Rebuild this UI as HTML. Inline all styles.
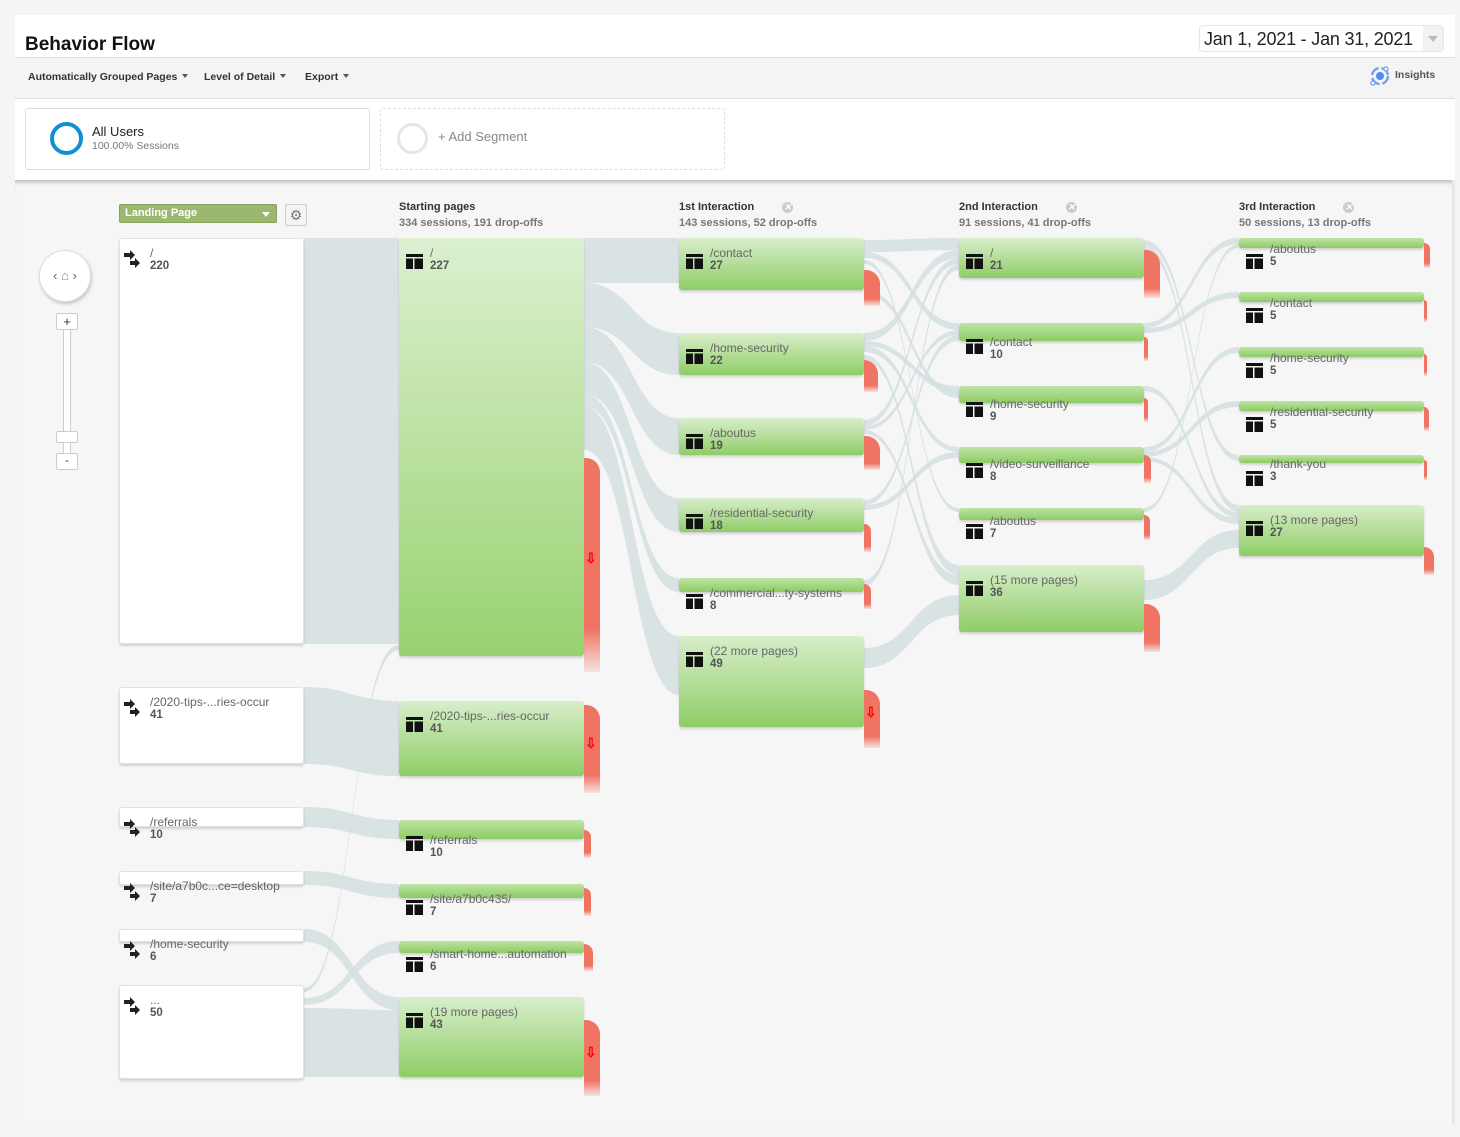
<!DOCTYPE html>
<html><head><meta charset="utf-8"><style>
*{box-sizing:border-box;margin:0;padding:0}
body{width:1460px;height:1137px;background:#f4f5f7;font-family:"Liberation Sans",Arial,sans-serif;position:relative;overflow:hidden;color:#333}
.abs{position:absolute}
#top{left:15px;top:15px;width:1440px;height:165px;background:#fff}
#title{left:25px;top:34px;font-size:19px;font-weight:bold;color:#111}
#tb{left:15px;top:57px;width:1440px;height:42px;background:#f4f4f4;border-top:1px solid #e0e0e0;border-bottom:1px solid #e0e0e0}
.tbi{top:71px;font-size:10.5px;font-weight:bold;color:#333}
.car{display:inline-block;width:0;height:0;border-left:3.5px solid transparent;border-right:3.5px solid transparent;border-top:4px solid #555;margin-left:5px;vertical-align:2px}
#date{left:1199px;top:25px;width:245px;height:27px;border:1px solid #e6e6e6;border-radius:4px;font-size:18px;color:#222;padding:3px 0 0 4px;background:#fff;white-space:nowrap;letter-spacing:-0.2px}
#date:after{content:"";position:absolute;right:0;top:0;width:20px;height:25px;background:#f2f2f2}
#seg1{left:25px;top:108px;width:345px;height:62px;border:1px solid #ddd;border-radius:3px;background:#fff}
#seg2{left:380px;top:108px;width:345px;height:62px;border:1px dashed #ddd;border-radius:3px;background:#fff}
#canvas{left:15px;top:180px;width:1440px;height:945px;background:#f6f6f6;box-shadow:inset 0 5px 5px -3px rgba(0,0,0,.25);border-right:3px solid #e8e8e8}
.node{position:absolute;border-radius:3px;box-shadow:0 2px 2px rgba(0,0,0,.15)}
.g{background:linear-gradient(#d8eecb,#8fcd66)}
.w{background:#fff;border:1px solid #dde4e4}
.lbl{position:absolute;font-size:12px;color:#666;white-space:nowrap;line-height:13px}
.lbl b{display:block;color:#555;font-size:11.5px}
.ic{position:absolute;width:17px;height:15px}
.drop{position:absolute;border-top-right-radius:14px;background:linear-gradient(#f07464 80%,rgba(240,116,100,.15))}
.arr{position:absolute;color:#f00;font-size:14px;font-weight:bold;left:1px}
.hd{position:absolute;font-size:11px;font-weight:bold;color:#333;line-height:16px}
.hd span{color:#777;display:block}
.xx{display:inline-block;width:11px;height:11px;border-radius:50%;background:#ccc;color:#fff;font-size:9px;line-height:11px;text-align:center;margin-left:28px;vertical-align:0}
</style></head><body>
<div id="top" class="abs"></div>
<div id="title" class="abs">Behavior Flow</div>
<div id="date" class="abs">Jan 1, 2021 - Jan 31, 2021<span style="position:absolute;right:5px;top:10px;z-index:2;border-left:5px solid transparent;border-right:5px solid transparent;border-top:6px solid #bbb"></span></div>
<div id="tb" class="abs"></div>
<div class="abs tbi" style="left:28px">Automatically Grouped Pages<span class="car"></span></div>
<div class="abs tbi" style="left:204px">Level of Detail<span class="car"></span></div>
<div class="abs tbi" style="left:305px">Export<span class="car"></span></div>
<svg class="abs" style="left:1369px;top:65px" width="22" height="22" viewBox="0 0 22 22"><circle cx="11" cy="11" r="8" fill="none" stroke="#6aa0ee" stroke-width="2.2" stroke-dasharray="10 3"/><circle cx="11" cy="11" r="4" fill="#4d8ef0"/><circle cx="17" cy="4" r="2" fill="#fff" stroke="#6aa0ee" stroke-width="1.3"/><circle cx="4" cy="18" r="2" fill="#fff" stroke="#6aa0ee" stroke-width="1.3"/></svg>
<div class="abs tbi" style="left:1395px;top:69px;color:#555">Insights</div>
<div id="seg1" class="abs"></div>
<div class="abs" style="left:50px;top:122px;width:33px;height:33px;border:4px solid #118fd0;border-radius:50%"></div>
<div class="abs" style="left:92px;top:124px;font-size:13px;color:#222">All Users</div>
<div class="abs" style="left:92px;top:140px;font-size:10.5px;color:#777">100.00% Sessions</div>
<div id="seg2" class="abs"></div>
<div class="abs" style="left:397px;top:123px;width:31px;height:31px;border:3px solid #e6e6e6;border-radius:50%"></div>
<div class="abs" style="left:438px;top:129px;font-size:13px;color:#888">+ Add Segment</div>
<div id="canvas" class="abs"></div>

<div class="abs" style="left:39px;top:250px;width:52px;height:52px;border-radius:50%;background:#fff;border:1px solid #ddd;box-shadow:1px 2px 3px rgba(0,0,0,.2);text-align:center;line-height:50px;font-size:13px;color:#666">‹ <span style="color:#888">&#8962;</span> ›</div>
<div class="abs" style="left:63px;top:325px;width:8px;height:133px;background:#fff;border:1px solid #ccc"></div>
<div class="abs" style="left:56px;top:313px;width:22px;height:17px;background:#fff;border:1px solid #ccc;border-radius:2px;text-align:center;font-size:13px;line-height:15px;color:#333">+</div>
<div class="abs" style="left:56px;top:431px;width:22px;height:12px;background:#fff;border:1px solid #ccc;border-radius:2px"></div>
<div class="abs" style="left:56px;top:453px;width:22px;height:17px;background:#fff;border:1px solid #ccc;border-radius:2px;text-align:center;font-size:11px;line-height:14px;color:#333">-</div>

<div class="abs" style="left:119px;top:204px;width:158px;height:19px;background:#9cb870;border:1px solid #86a35b;border-radius:2px;color:#fff;font-size:11px;font-weight:bold;padding:2px 0 0 5px">Landing Page<span style="position:absolute;right:6px;top:7px;border-left:4px solid transparent;border-right:4px solid transparent;border-top:5px solid #fff"></span></div>
<div class="abs" style="left:285px;top:204px;width:22px;height:22px;background:#f4f4f4;border:1px solid #ccc;border-radius:2px;text-align:center;color:#777;font-size:14px;line-height:20px">&#9881;</div>

<div class="hd" style="left:399px;top:199px">Starting pages<span>334 sessions, 191 drop-offs</span></div>
<div class="hd" style="left:679px;top:199px">1st Interaction<i class="xx">✕</i><span>143 sessions, 52 drop-offs</span></div>
<div class="hd" style="left:959px;top:199px">2nd Interaction<i class="xx">✕</i><span>91 sessions, 41 drop-offs</span></div>
<div class="hd" style="left:1239px;top:199px">3rd Interaction<i class="xx">✕</i><span>50 sessions, 13 drop-offs</span></div>

<svg id="flows" class="abs" style="left:0;top:0" width="1460" height="1137"></svg>
<div id="nodes"></div>

<script>
const svg=document.getElementById('flows');
function band(x1,a1,b1,x2,a2,b2,op){
 const m=(x1+x2)/2;
 const p=document.createElementNS('http://www.w3.org/2000/svg','path');
 p.setAttribute('d',`M${x1} ${a1} C${m} ${a1} ${m} ${a2} ${x2} ${a2} L${x2} ${b2} C${m} ${b2} ${m} ${b1} ${x1} ${b1}Z`);
 p.setAttribute('fill','#d3dfe0');p.setAttribute('fill-opacity',op||0.85);
 svg.appendChild(p);
}
band(304,238,644,399,238,644);
band(304,687,764,399,701,776);
band(304,807,827,399,820,839);
band(304,871,885,399,884,898);
band(304,929,942,399,997,1010);
band(304,1008,1077,399,1010,1077);
band(304,998,1005,399,941,953);
band(304,988,992,399,645,650,0.9);
band(584,238,283,679,238,283);
band(584,283,327,679,333,375);
band(584,327,362,679,418,455);
band(584,362,394,679,498,532);
band(584,394,406,679,578,592);
band(584,406,450,679,636,695);
band(864,240,252,959,238,250);
band(864,252,258,959,323,330);
band(864,333,341,959,250,258);
band(864,341,346,959,386,392);
band(864,346,352,959,447,452);
band(864,420,426,959,258,264);
band(864,426,430,959,330,335);
band(864,500,505,959,335,341);
band(864,505,510,959,452,458);
band(864,260,264,959,508,512);
band(864,355,360,959,565,575);
band(864,430,434,959,575,585);
band(864,580,586,959,264,270);
band(864,648,668,959,595,615);
band(864,290,295,959,392,398);
band(1144,240,246,1239,455,461);
band(1144,246,252,1239,505,512);
band(1144,323,328,1239,238,244);
band(1144,328,333,1239,292,298);
band(1144,386,391,1239,512,518);
band(1144,447,452,1239,347,353);
band(1144,452,457,1239,401,407);
band(1144,508,512,1239,244,248);
band(1144,580,600,1239,530,548);
band(1144,457,461,1239,518,524);

const icon=`<svg width="17" height="15" viewBox="0 0 17 15"><rect x="0" y="0" width="17" height="3" fill="#111"/><rect x="0" y="4.5" width="7" height="10.5" fill="#111"/><rect x="8.5" y="4.5" width="8.5" height="10.5" fill="#111"/></svg>`;
const arrows=`<svg width="20" height="20" viewBox="0 0 20 20"><path d="M0 4h6V1l5 5-5 5V8H0z" fill="#222"/><path d="M6 12h5V9l5 5-5 5v-3H6z" fill="#222"/></svg>`;
let H='';
function node(x,y,h,name,n,type,light){
 const cls=type==='w'?'w':'g';
 let bg='';
 if(type!=='w'&&h<25)bg='background:linear-gradient(#bfe3a5,#8ccc63)';
 if(light)bg='background:linear-gradient(#dcf0d0,#98d270)';
 H+=`<div class="node ${cls}" style="left:${x}px;top:${y}px;width:185px;height:${h}px;${bg}"></div>`;
 if(type==='w'){
  H+=`<div class="abs" style="left:${x+5}px;top:${y+11}px">${arrows}</div>`;
  H+=`<div class="lbl" style="left:${x+31}px;top:${y+9}px">${name}<b>${n}</b></div>`;
 }else{
  const oy=14;
  H+=`<div class="ic" style="left:${x+7}px;top:${y+oy+2}px">${icon}</div>`;
  H+=`<div class="lbl" style="left:${x+31}px;top:${y+(h<25?h-5:9)}px">${name}<b>${n}</b></div>`;
 }
}
function drop(x,y,h,w,arr){
 H+=`<div class="drop" style="left:${x}px;top:${y}px;height:${h}px;width:${w}px"></div>`;
 if(arr)H+=`<div class="arr" style="left:${x+1}px;top:${y+arr}px">&#8681;</div>`;
}
const c0=119;
node(c0,238,406,'/','220','w');
node(c0,687,77,'/2020-tips-...ries-occur','41','w');
node(c0,807,20,'/referrals','10','w');
node(c0,871,14,'/site/a7b0c...ce=desktop','7','w');
node(c0,929,13,'/home-security','6','w');
node(c0,985,94,'...','50','w');
const c1=399;
node(c1,238,418,'/','227','g',true);
node(c1,701,75,'/2020-tips-...ries-occur','41','g');
node(c1,820,19,'/referrals','10','g');
node(c1,884,14,'/site/a7b0c435/','7','g');
node(c1,941,12,'/smart-home...automation','6','g');
node(c1,997,80,'(19 more pages)','43','g');
drop(584,458,214,16,92);drop(584,705,88,16,30);drop(584,830,28,7);drop(584,888,28,7);drop(584,944,27,9);drop(584,1020,76,16,24);
const c2=679;
node(c2,238,52,'/contact','27','g');
node(c2,333,42,'/home-security','22','g');
node(c2,418,37,'/aboutus','19','g');
node(c2,498,34,'/residential-security','18','g');
node(c2,578,14,'/commercial...ty-systems','8','g');
node(c2,636,91,'(22 more pages)','49','g');
drop(864,270,36,16);drop(864,360,32,14);drop(864,436,34,16);drop(864,524,28,7);drop(864,584,25,7);drop(864,690,58,16,14);
const c3=959;
node(c3,238,40,'/','21','g');
node(c3,323,18,'/contact','10','g');
node(c3,386,17,'/home-security','9','g');
node(c3,447,16,'/video-surveillance','8','g');
node(c3,508,12,'/aboutus','7','g');
node(c3,565,67,'(15 more pages)','36','g');
drop(1144,250,48,16);drop(1144,337,24,4);drop(1144,398,24,4);drop(1144,455,28,7);drop(1144,515,25,6);drop(1144,604,48,16);
const c4=1239;
node(c4,238,10,'/aboutus','5','g');
node(c4,292,10,'/contact','5','g');
node(c4,347,10,'/home-security','5','g');
node(c4,401,10,'/residential-security','5','g');
node(c4,455,8,'/thank-you','3','g');
node(c4,505,51,'(13 more pages)','27','g');
drop(1424,243,25,6);drop(1424,300,22,3);drop(1424,354,22,3);drop(1424,407,24,5);drop(1424,460,20,3);drop(1424,547,28,10);
document.getElementById('nodes').innerHTML=H;
</script>
</body></html>
